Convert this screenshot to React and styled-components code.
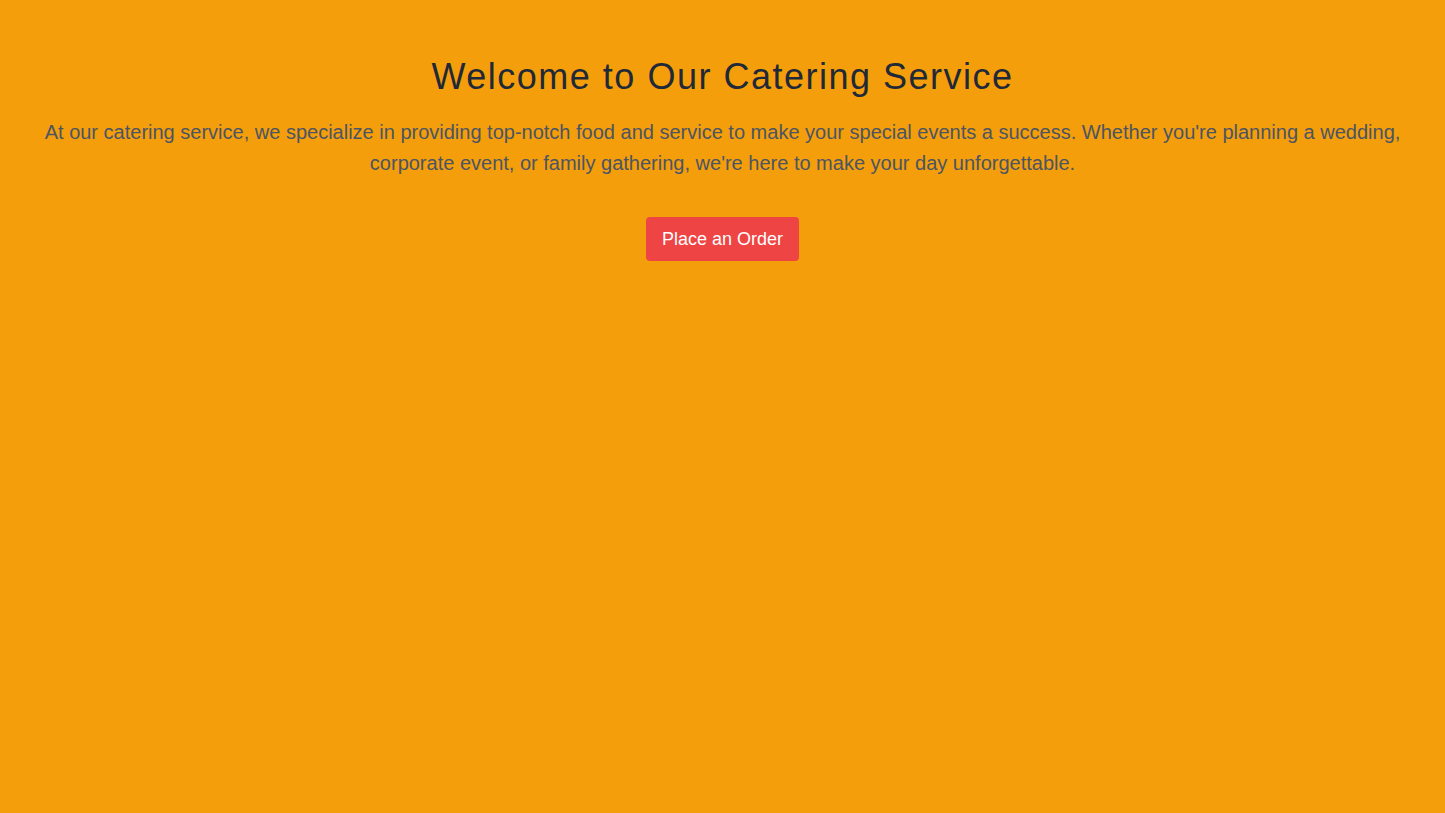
import React from "react";
import styled, { createGlobalStyle } from "styled-components";

const Global = createGlobalStyle`
    html, body {
        margin: 0;
        padding: 0;
        background: #f59e0b;
        font-family: "Liberation Sans", Arial, sans-serif;
    }
`;

const Page = styled.div`
    min-height: 100vh;
    background: #f59e0b;
`;

const Hero = styled.section`
    max-width: 1445px;
    margin: 0 auto;
    padding: 57px 16px 48px;
    text-align: center;
`;

const Title = styled.h1`
    margin: 0;
    font-size: 36px;
    line-height: 40px;
    font-weight: 400;
    letter-spacing: 1.5px;
    color: #1f2937;
`;

const Intro = styled.p`
    margin: 20px 0 0;
    font-size: 20px;
    line-height: 31px;
    color: #4b5563;
`;

const OrderButton = styled.button`
    margin-top: 38px;
    padding: 8px 16px;
    border: none;
    border-radius: 4px;
    background: #ef4444;
    color: #fff;
    font-family: inherit;
    font-size: 18px;
    line-height: 28px;
    cursor: pointer;
`;

export default function App() {
    return (
        <Page>
            <Global />
            <Hero>
                <Title>Welcome to Our Catering Service</Title>
                <Intro>
                    At our catering service, we specialize in providing top-notch food and service to make your
                    special events a success. Whether you're planning a wedding, corporate event, or family
                    gathering, we're here to make your day unforgettable.
                </Intro>
                <OrderButton>Place an Order</OrderButton>
            </Hero>
        </Page>
    );
}
